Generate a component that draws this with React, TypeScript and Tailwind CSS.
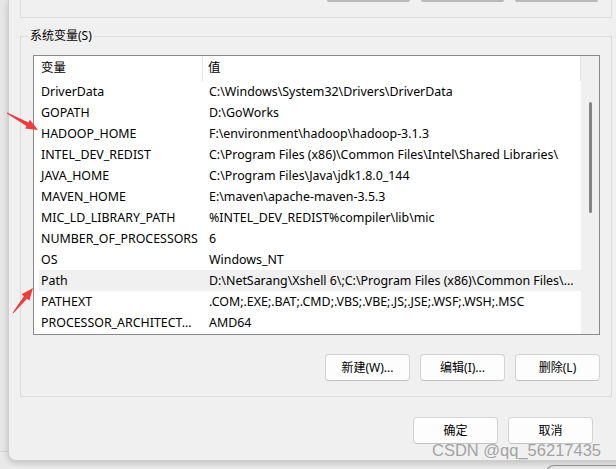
const font = { fontFamily: '"Noto Sans", "Noto Sans CJK SC", sans-serif' };

const rows: [string, string][] = [
    ['DriverData', 'C:\\Windows\\System32\\Drivers\\DriverData'],
    ['GOPATH', 'D:\\GoWorks'],
    ['HADOOP_HOME', 'F:\\environment\\hadoop\\hadoop-3.1.3'],
    ['INTEL_DEV_REDIST', 'C:\\Program Files (x86)\\Common Files\\Intel\\Shared Libraries\\'],
    ['JAVA_HOME', 'C:\\Program Files\\Java\\jdk1.8.0_144'],
    ['MAVEN_HOME', 'E:\\maven\\apache-maven-3.5.3'],
    ['MIC_LD_LIBRARY_PATH', '%INTEL_DEV_REDIST%compiler\\lib\\mic'],
    ['NUMBER_OF_PROCESSORS', '6'],
    ['OS', 'Windows_NT'],
    ['Path', 'D:\\NetSarang\\Xshell 6\\;C:\\Program Files (x86)\\Common Files\\...'],
    ['PATHEXT', '.COM;.EXE;.BAT;.CMD;.VBS;.VBE;.JS;.JSE;.WSF;.WSH;.MSC'],
    ['PROCESSOR_ARCHITECT...', 'AMD64'],
];

function Btn({ label }: { label: string }) {
    return (
        <button className="flex h-[27px] w-[85px] items-center justify-center rounded-[4px] border border-[#d3d3d3] border-b-[#c2c2c2] bg-[#fdfdfd] text-[12px] text-black">
            {label}
        </button>
    );
}

export default function App() {
    return (
        <div className="relative flex h-[469px] w-[616px] overflow-hidden bg-[#e9e9e9] text-black" style={font}>
            <div className="h-[452px] w-[8px] shrink-0 border-b border-[#d6d6d6] bg-[#e6e6e6]" />
            <div className="flex h-[461px] w-[620px] shrink-0 flex-col rounded-bl-[8px] border-b border-l border-[#cfcfcf] bg-[#f0f0f0] pl-[11px] shadow-[0_2px_6px_rgba(0,0,0,0.18)]">
                {/* upper group, cut off */}
                <div className="flex h-[18px] w-[592px] justify-end gap-[11px] border-x border-b border-[#dcdcdc] pr-[13px]">
                    <div className="h-[2px] w-[83px] rounded-b-[2px] bg-[#b9b9b9]" />
                    <div className="h-[2px] w-[83px] rounded-b-[2px] bg-[#b9b9b9]" />
                    <div className="h-[2px] w-[83px] rounded-b-[2px] bg-[#b9b9b9]" />
                </div>

                {/* system variables */}
                <div className="relative mt-[18px] flex h-[361px] w-[592px] flex-col border border-[#dcdcdc] pl-[12px] pr-[11px] pt-[18px]">
                    <span className="absolute left-[7px] top-[-9px] bg-[#f0f0f0] px-[2px] text-[12px] leading-[16px]">系统变量(S)</span>
                    <div className="flex h-[280px] w-[567px] border border-[#8a8a8a] bg-white">
                        <div className="flex w-[547px] flex-col text-[12.4px]">
                            <div className="flex h-[25px] items-center">
                                <div className="flex h-full w-[169px] items-center border-r border-[#e5e5e5] pl-[7px]">变量</div>
                                <div className="flex h-full flex-1 items-center border-r border-[#e5e5e5] pl-[5px]">值</div>
                            </div>
                            <div className="flex flex-col pl-[5px]">
                                {rows.map(([k, v]) => (
                                    <div key={k} className={`flex h-[21px] items-center pt-[2px] ${k === 'Path' ? 'bg-[#f0f0f0]' : ''}`}>
                                        <div className="w-[164px] overflow-hidden whitespace-nowrap pl-[2px]">{k}</div>
                                        <div className="flex-1 overflow-hidden whitespace-nowrap pl-[6px]">{v}</div>
                                    </div>
                                ))}
                            </div>
                        </div>
                        <div className="w-[18px] bg-[#f0f0f0] pl-[8px] pt-[46px]">
                            <div className="h-[111px] w-[3px] rounded-full bg-[#858585]" />
                        </div>
                    </div>
                    <div className="mt-[19px] flex w-[567px] justify-end gap-[10px]">
                        <Btn label="新建(W)..." />
                        <Btn label="编辑(I)..." />
                        <Btn label="删除(L)" />
                    </div>
                </div>

                <div className="mt-[20px] flex w-[592px] justify-end gap-[10px] pr-[19px]">
                    <Btn label="确定" />
                    <Btn label="取消" />
                </div>
            </div>

            {/* another window corner */}
            <div className="absolute left-[546px] top-[465px] h-[20px] w-[100px] rounded-tl-[8px] border-l border-t border-[#8f8f8f]" />

            {/* annotations */}
            <svg className="absolute left-0 top-0" width="616" height="469" viewBox="0 0 616 469">
                <polygon fill="#ef3b3b" points="7.24,112.56 28.5,122.5 29.9,119.8 38,130 25.1,128.6 26.5,126 6.76,113.44" />
                <polygon fill="#ef3b3b" points="13.39,313.31 27.06,298.65 29.4,300.5 33,288 21.6,294.3 23.94,296.15 12.61,312.69" />
            </svg>
            <span
                className="absolute left-[432px] top-[440px] text-[16.5px] leading-[20px] text-[#a3a3a3]"
                style={{ fontFamily: '"Liberation Sans", Arial, sans-serif' }}
            >
                CSDN @qq_56217435
            </span>
        </div>
    );
}
